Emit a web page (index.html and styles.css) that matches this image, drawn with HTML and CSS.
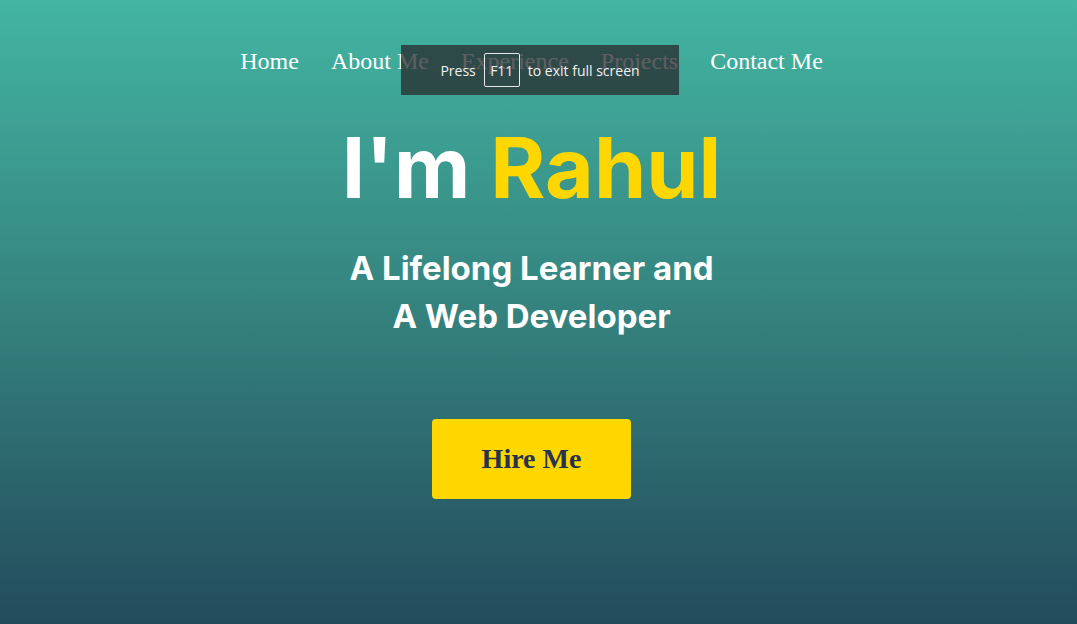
FILE: index.html
```html
<!DOCTYPE html>
<html lang="en">
<head>
<meta charset="utf-8">
<title>Rahul</title>
<link rel="stylesheet" href="styles.css">
</head>
<body>
<div class="page">
  <nav class="nav">
    <a class="nav-link" href="#">Home</a>
    <a class="nav-link" href="#">About Me</a>
    <a class="nav-link" href="#">Experience</a>
    <a class="nav-link" href="#">Projects</a>
    <a class="nav-link" href="#">Contact Me</a>
  </nav>
  <main class="hero">
    <h1 class="title">I'm <span class="accent">Rahul</span></h1>
    <h2 class="subtitle">A Lifelong Learner and<br>A Web Developer</h2>
    <a class="hire" href="#">Hire Me</a>
  </main>
  <div class="fs-toast">
    <span>Press</span><span class="key">F11</span><span>to exit full screen</span>
  </div>
</div>
</body>
</html>
```

FILE: styles.css
```css
html, body {
  margin: 0;
  padding: 0;
}
body {
  min-height: 624px;
  background: linear-gradient(180deg, #43b5a2 0%, #35847f 48%, #234b5c 100%);
  color: #fff;
}
.page {
  position: relative;
  min-height: 624px;
  box-sizing: border-box;
  padding-right: 14px;
  display: flex;
  flex-direction: column;
  align-items: center;
}
.nav {
  display: flex;
  gap: 32px;
  padding-top: 48px;
}
.nav-link {
  font-family: "Liberation Serif", "Times New Roman", serif;
  font-size: 24px;
  line-height: 27px;
  color: #fff;
  text-decoration: none;
}
.hero {
  display: flex;
  flex-direction: column;
  align-items: center;
  text-align: center;
}
.title {
  margin: 42px 0 0;
  font-family: Inter, "DejaVu Sans", sans-serif;
  font-weight: 700;
  font-size: 84px;
  line-height: 102px;
  letter-spacing: 0;
}
.accent {
  color: #ffd700;
}
.subtitle {
  margin: 25px 0 0;
  font-family: Inter, "DejaVu Sans", sans-serif;
  font-weight: 700;
  font-size: 33px;
  line-height: 48px;
}
.hire {
  margin-top: 79px;
  width: 199px;
  height: 80px;
  box-sizing: border-box;
  display: flex;
  align-items: center;
  justify-content: center;
  background: #ffd700;
  border-radius: 4px;
  font-family: "Liberation Serif", "Times New Roman", serif;
  font-weight: 700;
  font-size: 28px;
  color: #263250;
  text-decoration: none;
}
.fs-toast {
  position: absolute;
  left: 401px;
  top: 45px;
  width: 278px;
  height: 50px;
  display: flex;
  align-items: center;
  justify-content: center;
  gap: 8px;
  background: rgba(40, 42, 44, 0.75);
  font-family: "Open Sans", "Noto Sans", sans-serif;
  font-size: 14px;
  color: #f2f2f2;
}
.key {
  display: flex;
  align-items: center;
  justify-content: center;
  width: 34px;
  height: 32px;
  border: 1px solid #e8e8e8;
  border-radius: 2px;
}
```
